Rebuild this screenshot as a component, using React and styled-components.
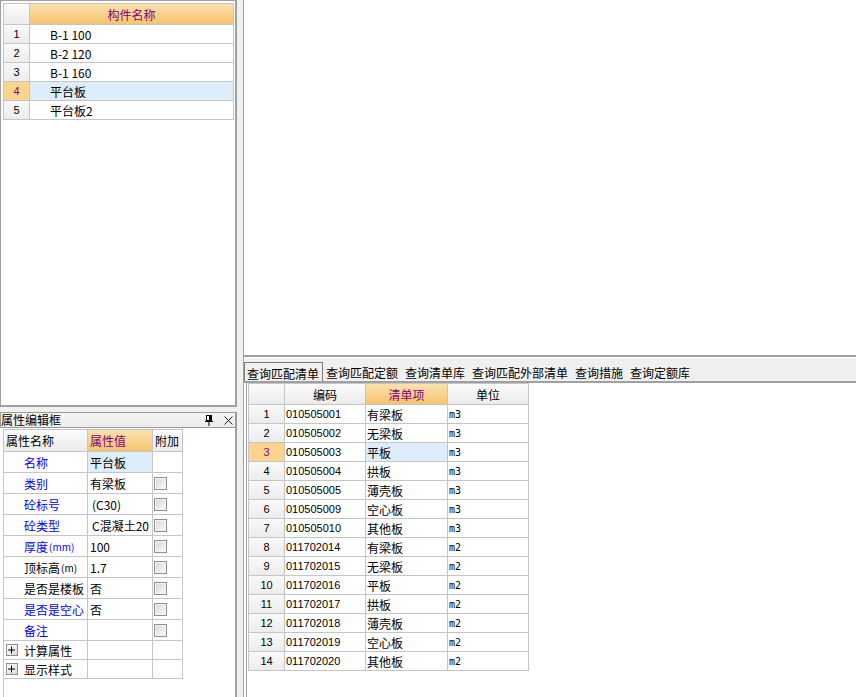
import React from 'react'
import styled, { createGlobalStyle, css } from 'styled-components'

const GlobalStyle = createGlobalStyle`
  html, body { margin: 0; padding: 0; }
  body {
    font-family: "Noto Sans CJK SC", "Liberation Sans", sans-serif;
    font-size: 12px;
    color: #000;
    background: #f0f0f0;
  }
`

const components = ['B-1 100', 'B-2 120', 'B-1 160', '平台板', '平台板2']
const selectedComponent = 3

const props = [
  { name: '名称', value: '平台板', blue: true, selected: true, noCheck: true },
  { name: '类别', value: '有梁板', blue: true },
  { name: '砼标号', value: '(C30)', blue: true, indent: true },
  { name: '砼类型', value: 'C混凝土20', blue: true, indent: true },
  { name: '厚度', unit: '(mm)', value: '100', blue: true },
  { name: '顶标高', unit: '(m)', value: '1.7' },
  { name: '是否是楼板', value: '否' },
  { name: '是否是空心', value: '否', blue: true },
  { name: '备注', value: '', blue: true }
]

const groups = ['计算属性', '显示样式']

const tabs = ['查询匹配清单', '查询匹配定额', '查询清单库', '查询匹配外部清单', '查询措施', '查询定额库']

const items = [
  ['010505001', '有梁板', 'm3'],
  ['010505002', '无梁板', 'm3'],
  ['010505003', '平板', 'm3'],
  ['010505004', '拱板', 'm3'],
  ['010505005', '薄壳板', 'm3'],
  ['010505009', '空心板', 'm3'],
  ['010505010', '其他板', 'm3'],
  ['011702014', '有梁板', 'm2'],
  ['011702015', '无梁板', 'm2'],
  ['011702016', '平板', 'm2'],
  ['011702017', '拱板', 'm2'],
  ['011702018', '薄壳板', 'm2'],
  ['011702019', '空心板', 'm2'],
  ['011702020', '其他板', 'm2']
]
const selectedItem = 2

const Page = styled.div`
  width: 856px;
  height: 697px;
  display: flex;
  background: #f0f0f0;
  overflow: hidden;
`

const LeftColumn = styled.div`
  width: 237px;
  flex-shrink: 0;
  display: flex;
  flex-direction: column;
`

const ComponentPanel = styled.div`
  height: 407px;
  box-sizing: border-box;
  background: #fff;
  border: 1px solid #a0a0a0;
  border-right-width: 2px;
  border-bottom-width: 2px;
  padding: 2px;
`

const TitleBar = styled.div`
  margin-top: 5px;
  height: 16px;
  box-sizing: border-box;
  border: 1px solid #9a9a9a;
  border-right-width: 2px;
  background: linear-gradient(#f6f6f6, #ebebeb);
  display: flex;
  align-items: center;
  padding-right: 2px;
  line-height: 14px;
  font-size: 12px;
`

const TitleText = styled.span`
  flex: 1;
`

const TitleIcons = styled.div`
  display: flex;
  align-items: center;
  gap: 11px;
`

const PropPanel = styled.div`
  flex: 1;
  background: #fff;
  border-right: 2px solid #a0a0a0;
  padding: 1px 0 0 3px;
  display: flex;
`

const PropFrame = styled.div`
  flex: 1;
  border-left: 1px solid #c5c5c5;
`

const Splitter = styled.div`
  width: 6px;
  flex-shrink: 0;
  background: #f0f0f0;
`

const RightColumn = styled.div`
  flex: 1;
  display: flex;
  flex-direction: column;
  border-left: 1px solid #a0a0a0;
`

const Canvas = styled.div`
  height: 357px;
  box-sizing: border-box;
  background: #fff;
  border-bottom: 2px solid #a0a0a0;
  flex-shrink: 0;
`

const TabBar = styled.div`
  height: 26px;
  box-sizing: border-box;
  border-top: 1px solid #fff;
  border-bottom: 2px solid #a0a0a0;
  background: #f0f0f0;
  display: flex;
  align-items: flex-end;
  flex-shrink: 0;
`

const Tab = styled.div`
  height: 19px;
  box-sizing: border-box;
  padding: 0 3px 0 2px;
  border: 1px solid transparent;
  border-bottom: none;
  display: flex;
  align-items: center;
  font-size: 12px;
  white-space: nowrap;
  ${p => p.$active && css`
    border-color: #7a7a7a;
    padding-top: 3px;
  `}
`

const Content = styled.div`
  flex: 1;
  background: #fff;
  padding-left: 2px;
  display: flex;
`

const ContentFrame = styled.div`
  flex: 1;
  border-left: 1px solid #a0a0a0;
  padding-left: 1px;
`

const Grid = styled.div`
  display: grid;
  width: max-content;
  grid-template-columns: ${p => p.$cols};
  grid-template-rows: ${p => p.$rows};
  grid-auto-rows: ${p => p.$row || 19}px;
  border-top: 1px solid #c5c5c5;
  border-left: ${p => (p.$noLeft ? 'none' : '1px solid #c5c5c5')};
`

const tones = {
  white: css`background: #fff;`,
  selected: css`background: #ddedfc;`,
  head: css`background: linear-gradient(#fcfcfc, #ebebeb);`,
  headActive: css`background: linear-gradient(#fbe2ae, #f4c46c); color: #800080;`,
  num: css`background: linear-gradient(#f9f9f9, #ececec);`,
  numActive: css`background: #fdd48c; color: #800080;`
}

const Cell = styled.div`
  box-sizing: border-box;
  border-right: 1px solid #c5c5c5;
  border-bottom: 1px solid #c5c5c5;
  display: flex;
  align-items: center;
  justify-content: ${p => (p.$center ? 'center' : 'flex-start')};
  padding-left: ${p => p.$pad || 0}px;
  overflow: hidden;
  white-space: nowrap;
  font-size: 12px;
  color: ${p => (p.$blue ? '#0000ff' : '#000')};
  ${p => tones[p.$tone || 'white']}
  ${p => p.$latin && css`
    font-family: "Liberation Sans", "Noto Sans CJK SC", sans-serif;
    font-size: 11px;
  `}
  ${p => p.$mono && css`
    font-family: "DejaVu Sans Mono", "Liberation Mono", monospace;
    font-size: 10px;
  `}
`

const Unit = styled.span`
  font-size: 10px;
  margin-left: 1px;
`

const CheckBox = styled.span`
  width: 13px;
  height: 13px;
  box-sizing: border-box;
  margin-left: 1px;
  border: 1px solid #8e8f8f;
  background: linear-gradient(135deg, #d6d6d6, #fbfbfb);
  box-shadow: inset 0 0 0 1px #f4f4f4;
`

const Expander = styled.span`
  width: 12px;
  height: 12px;
  box-sizing: border-box;
  border: 1px solid #8e8e8e;
  background: linear-gradient(135deg, #ffffff, #dcdcdc);
  display: inline-flex;
  align-items: center;
  justify-content: center;
  margin: 0 6px 0 2px;
`

const PinIcon = () => (
  <svg width='8' height='11' viewBox='0 0 8 11'>
    <rect x='1.5' y='0.5' width='5' height='5' fill='#fff' stroke='#000' />
    <rect x='4' y='1' width='2' height='4' fill='#000' />
    <line x1='0' y1='6.5' x2='8' y2='6.5' stroke='#000' />
    <line x1='4' y1='7' x2='4' y2='11' stroke='#000' />
  </svg>
)

const CloseIcon = () => (
  <svg width='9' height='9' viewBox='0 0 9 9'>
    <path d='M0.5 0.5 L8.5 8.5 M8.5 0.5 L0.5 8.5' stroke='#222' strokeWidth='1' fill='none' />
  </svg>
)

const PlusIcon = () => (
  <svg width='8' height='8' viewBox='0 0 8 8'>
    <path d='M0 4 H7 M3.5 0.5 V7.5' stroke='#000' strokeWidth='1' fill='none' />
  </svg>
)

const App = () => {
  return (
    <Page>
      <GlobalStyle />
      <LeftColumn>
        <ComponentPanel>
          <Grid $cols='26px 204px' $rows='21px'>
            <Cell $tone='head' />
            <Cell $tone='headActive' $center>构件名称</Cell>
            {components.map((name, i) => (
              <React.Fragment key={i}>
                <Cell $tone={i === selectedComponent ? 'numActive' : 'num'} $center $latin>
                  {i + 1}
                </Cell>
                <Cell $tone={i === selectedComponent ? 'selected' : 'white'} $pad={20}>
                  {name}
                </Cell>
              </React.Fragment>
            ))}
          </Grid>
        </ComponentPanel>

        <TitleBar>
          <TitleText>属性编辑框</TitleText>
          <TitleIcons>
            <PinIcon />
            <CloseIcon />
          </TitleIcons>
        </TitleBar>

        <PropPanel>
          <PropFrame>
            <Grid $cols='84px 65px 30px' $rows='22px repeat(9, 21px)' $noLeft>
              <Cell $tone='head' $pad={2}>属性名称</Cell>
              <Cell $tone='headActive' $pad={2}>属性值</Cell>
              <Cell $tone='head' $pad={2}>附加</Cell>
              {props.map(p => (
                <React.Fragment key={p.name}>
                  <Cell $pad={20} $blue={p.blue}>
                    {p.name}
                    {p.unit && <Unit>{p.unit}</Unit>}
                  </Cell>
                  <Cell $tone={p.selected ? 'selected' : 'white'} $pad={p.indent ? 4 : 2}>
                    {p.value}
                  </Cell>
                  <Cell>{!p.noCheck && <CheckBox />}</Cell>
                </React.Fragment>
              ))}
              {groups.map(g => (
                <React.Fragment key={g}>
                  <Cell>
                    <Expander><PlusIcon /></Expander>
                    {g}
                  </Cell>
                  <Cell />
                  <Cell />
                </React.Fragment>
              ))}
            </Grid>
          </PropFrame>
        </PropPanel>
      </LeftColumn>

      <Splitter />

      <RightColumn>
        <Canvas />
        <TabBar>
          {tabs.map((t, i) => (
            <Tab key={t} $active={i === 0}>{t}</Tab>
          ))}
        </TabBar>
        <Content>
          <ContentFrame>
            <Grid $cols='36px 81px 82px 81px' $rows='21px'>
              <Cell $tone='head' />
              <Cell $tone='head' $center>编码</Cell>
              <Cell $tone='headActive' $center>清单项</Cell>
              <Cell $tone='head' $center>单位</Cell>
              {items.map(([code, name, unit], i) => (
                <React.Fragment key={code}>
                  <Cell $tone={i === selectedItem ? 'numActive' : 'num'} $center $latin>
                    {i + 1}
                  </Cell>
                  <Cell $pad={1} $latin>{code}</Cell>
                  <Cell $tone={i === selectedItem ? 'selected' : 'white'} $pad={1}>
                    {name}
                  </Cell>
                  <Cell $pad={1} $mono>{unit}</Cell>
                </React.Fragment>
              ))}
            </Grid>
          </ContentFrame>
        </Content>
      </RightColumn>
    </Page>
  )
}

export default App
